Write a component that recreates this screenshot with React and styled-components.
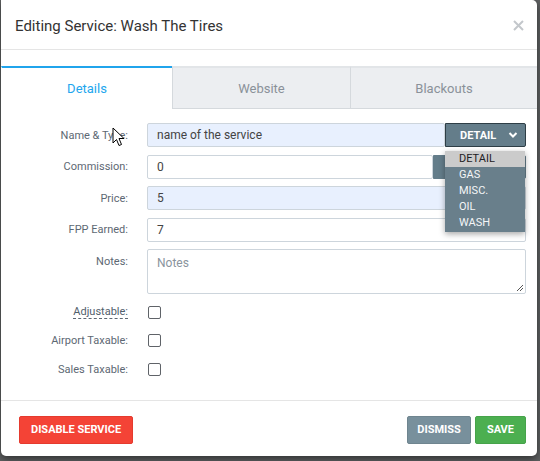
import React from "react";
import styled, { createGlobalStyle } from "styled-components";

const Global = createGlobalStyle`
  html, body { margin: 0; padding: 0; }
  body {
    background: #5f6162;
    font-family: Roboto, "Liberation Sans", Arial, sans-serif;
    width: 540px;
    height: 461px;
    overflow: hidden;
  }
`;

const Backdrop = styled.div`
  width: 540px;
  height: 461px;
  padding-left: 1px;
  box-sizing: border-box;
`;

const Modal = styled.div`
  position: relative;
  width: 536px;
  height: 456px;
  background: #fff;
  border-radius: 0 5px 5px 5px;
  box-shadow: 0 3px 9px rgba(0, 0, 0, 0.5);
  display: flex;
  flex-direction: column;
`;

const Header = styled.div`
  height: 50px;
  box-sizing: border-box;
  border-bottom: 1px solid #e5e5e5;
  display: flex;
  align-items: center;
  justify-content: space-between;
  padding: 0 13px 0 14px;
`;

const Title = styled.h4`
  margin: 0;
  font-size: 15px;
  font-weight: 400;
  color: #333;
  padding-top: 2px;
`;

const Close = styled.svg`
  display: block;
  margin-top: 2px;
`;

const Tabs = styled.div`
  display: flex;
  margin-top: 16px;
  height: 43px;
`;

const Tab = styled.div`
  width: ${(p) => p.$w}px;
  flex: ${(p) => (p.$grow ? 1 : "none")};
  box-sizing: border-box;
  display: flex;
  align-items: center;
  justify-content: center;
  font-size: 13px;
  color: ${(p) => (p.$active ? "#22a6ee" : "#8a9199")};
  background: ${(p) => (p.$active ? "#fff" : "#eceef1")};
  border-top: 2px solid ${(p) => (p.$active ? "#20a4ec" : "#e2e5e8")};
  border-bottom: 1px solid ${(p) => (p.$active ? "transparent" : "#d5d9dd")};
  border-left: 1px solid ${(p) => (p.$first ? "transparent" : "#d5d9dd")};
  padding-top: 1px;
`;

const Body = styled.div`
  flex: 1;
  padding: 14px 11px 0 0;
  display: flex;
  flex-direction: column;
  gap: 7.5px;
`;

const Row = styled.div`
  display: grid;
  grid-template-columns: 127px 1fr;
  column-gap: 19px;
  align-items: ${(p) => (p.$top ? "start" : "center")};
  min-height: ${(p) => (p.$h ? p.$h : 24)}px;
`;

const Label = styled.label`
  justify-self: end;
  font-size: 11px;
  color: #5d6873;
  padding-top: ${(p) => (p.$top ? 6 : 0)}px;
  ${(p) =>
    p.$dashed &&
    `border-bottom: 1px dashed #5d6873; line-height: 13px; color:#51606c;`}
`;

const Group = styled.div`
  display: flex;
  height: 24px;
`;

const Input = styled.div`
  flex: 1;
  height: 24px;
  box-sizing: border-box;
  border: 1px solid #cdd5dc;
  border-radius: 2px;
  background: ${(p) => (p.$filled ? "#e8f0fe" : "#fff")};
  font-size: 12px;
  color: #444;
  display: flex;
  align-items: center;
  padding-left: 9px;
`;

const Addon = styled.div`
  width: ${(p) => p.$w}px;
  height: 24px;
  box-sizing: border-box;
  background: #647d8a;
  border: 1px solid ${(p) => (p.$dark ? "#2e3e46" : "#647d8a")};
  border-radius: 0 2px 2px 0;
  color: #fff;
  font-size: 11px;
  font-weight: 700;
  display: flex;
  align-items: center;
  justify-content: space-between;
  padding: 0 7px 0 14px;
`;

const TextArea = styled.div`
  position: relative;
  height: 45px;
  box-sizing: border-box;
  border: 1px solid #cdd5dc;
  border-radius: 2px;
  font-size: 12px;
  color: #8a949d;
  padding: 6px 9px;
`;

const Grip = styled.svg`
  position: absolute;
  right: 1px;
  bottom: 1px;
`;

const Check = styled.span`
  width: 11px;
  height: 11px;
  border: 1px solid #5f6368;
  border-radius: 2px;
  background: #fff;
  margin-left: 1px;
`;

const Footer = styled.div`
  height: 55px;
  border-top: 1px solid #e5e5e5;
  display: flex;
  align-items: center;
  padding: 0 11px 0 18px;
  gap: 4px;
  margin-top: auto;
`;

const Button = styled.button`
  height: 28px;
  padding: 0 ${(p) => p.$px}px;
  border: 1px solid ${(p) => p.$border};
  background: ${(p) => p.$bg};
  color: #fff;
  border-radius: 2px;
  font-family: Roboto, "Liberation Sans", Arial, sans-serif;
  font-size: 11px;
  font-weight: 700;
  margin-left: ${(p) => (p.$push ? "auto" : "0")};
  margin-top: 2px;
`;

const Menu = styled.ul`
  position: absolute;
  left: 444px;
  top: 151px;
  width: 80px;
  margin: 0;
  padding: 0 0 1px;
  list-style: none;
  background: #697f8b;
  box-shadow: 0 2px 6px rgba(0, 0, 0, 0.35);
`;

const Item = styled.li`
  height: 16px;
  line-height: 16px;
  padding-left: 14px;
  font-size: 11px;
  color: ${(p) => (p.$hl ? "#1e2124" : "#f4f6f7")};
  background: ${(p) => (p.$hl ? "#cbcbcb" : "transparent")};
`;

const Cursor = styled.svg`
  position: absolute;
  left: 111px;
  top: 127px;
`;

export default function App() {
  return (
    <>
      <Global />
      <Backdrop>
        <Modal>
          <Header>
            <Title>Editing Service: Wash The Tires</Title>
            <Close width="11" height="11" viewBox="0 0 11 11">
              <path d="M1 1 L10 10 M10 1 L1 10" stroke="#c3c7cb" strokeWidth="2" />
            </Close>
          </Header>
          <Tabs>
            <Tab $w={171} $active $first>Details</Tab>
            <Tab $w={178}>Website</Tab>
            <Tab $grow>Blackouts</Tab>
          </Tabs>
          <Body>
            <Row>
              <Label>Name &amp; Type:</Label>
              <Group>
                <Input $filled>name of the service</Input>
                <Addon $w={81} $dark>
                  DETAIL
                  <svg width="10" height="8" viewBox="0 0 10 8">
                    <path d="M1.5 2 L5 5.5 L8.5 2" fill="none" stroke="#fff" strokeWidth="2" />
                  </svg>
                </Addon>
              </Group>
            </Row>
            <Row>
              <Label>Commission:</Label>
              <Group>
                <Input>0</Input>
                <Addon $w={93} />
              </Group>
            </Row>
            <Row>
              <Label>Price:</Label>
              <Input $filled>5</Input>
            </Row>
            <Row>
              <Label>FPP Earned:</Label>
              <Input>7</Input>
            </Row>
            <Row $top $h={45}>
              <Label $top>Notes:</Label>
              <TextArea>
                Notes
                <Grip width="9" height="9" viewBox="0 0 9 9">
                  <path d="M8 2 L2 8 M8 5 L5 8" stroke="#555" strokeWidth="1" />
                </Grip>
              </TextArea>
            </Row>
            <Row $h={21}>
              <Label $dashed>Adjustable:</Label>
              <Check />
            </Row>
            <Row $h={21}>
              <Label>Airport Taxable:</Label>
              <Check />
            </Row>
            <Row $h={21}>
              <Label>Sales Taxable:</Label>
              <Check />
            </Row>
          </Body>
          <Footer>
            <Button $bg="#f44336" $border="#e53a2e" $px={11}>DISABLE SERVICE</Button>
            <Button $bg="#78909c" $border="#6f858f" $px={9} $push>DISMISS</Button>
            <Button $bg="#4caf50" $border="#46a34a" $px={11}>SAVE</Button>
          </Footer>
          <Menu>
            <Item $hl>DETAIL</Item>
            <Item>GAS</Item>
            <Item>MISC.</Item>
            <Item>OIL</Item>
            <Item>WASH</Item>
          </Menu>
          <Cursor width="14" height="21" viewBox="0 0 14 21">
            <path d="M1 1 L1 16 L4.5 12.5 L7 18.5 L9.5 17.5 L7 11.5 L12 11.5 Z" fill="#fff" stroke="#000" strokeWidth="1" strokeLinejoin="miter" />
          </Cursor>
        </Modal>
      </Backdrop>
    </>
  );
}
